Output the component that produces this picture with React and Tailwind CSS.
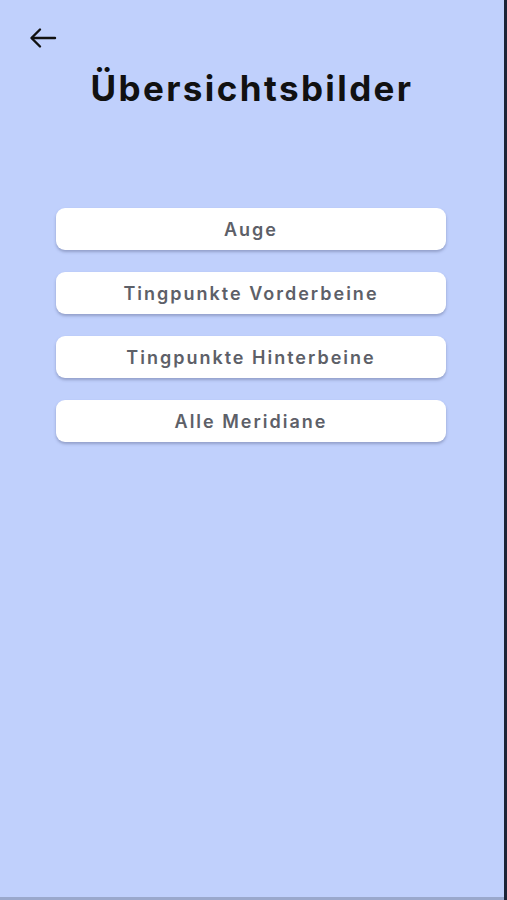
import React from 'react';

const items = ['Auge', 'Tingpunkte Vorderbeine', 'Tingpunkte Hinterbeine', 'Alle Meridiane'];

export default function App() {
  return (
    <div className="w-[507px] h-[900px] flex bg-[#c0d0fc]" style={{ fontFamily: "Inter, 'Noto Sans', sans-serif" }}>
      <div className="flex-1 flex flex-col border-b-[3px] border-[#9aa8cc]">
        <div className="pt-[26px] pl-[28px]">
          <button className="text-black">
            <svg width="30" height="24" viewBox="0 0 30 24" fill="none" stroke="#111" strokeWidth="2.4" strokeLinecap="round" strokeLinejoin="round">
              <path d="M27 12H4" />
              <path d="M12 3.5L3.5 12L12 20.5" />
            </svg>
          </button>
        </div>
        <h1 className="mt-[12px] text-center text-[35px] font-bold text-[#111] tracking-[2.4px] leading-[40px]">
          Übersichtsbilder
        </h1>
        <div className="mt-[100px] flex flex-col gap-[22px] pl-[56px] pr-[58px]">
          {items.map(label => (
            <button
              key={label}
              className="h-[42px] w-full bg-white rounded-[9px] shadow-[0_2px_3px_rgba(60,70,110,0.35)] text-[18px] font-semibold text-[#5d6068] tracking-[2px]"
            >
              {label}
            </button>
          ))}
        </div>
      </div>
      <div className="w-[3px] h-full bg-[#1c2436]" />
    </div>
  );
}
